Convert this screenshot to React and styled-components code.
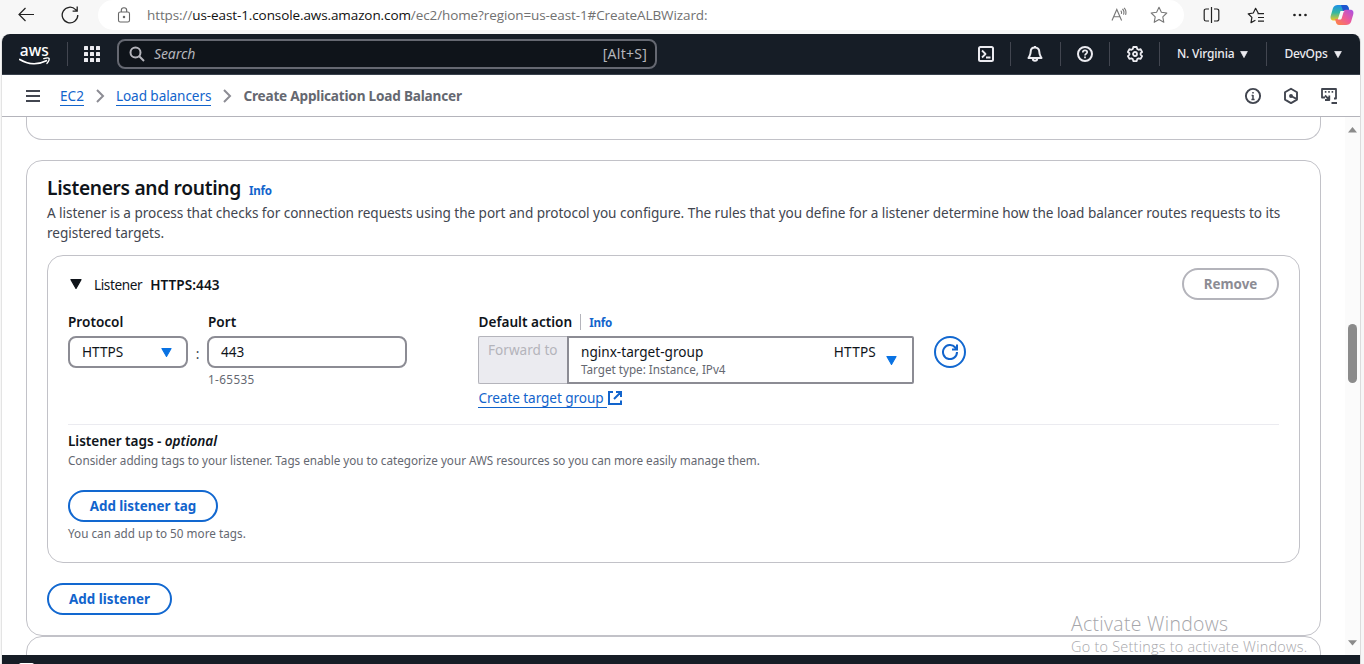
import React from "react";
import styled, { createGlobalStyle } from "styled-components";

const Global = createGlobalStyle`
  *, *::before, *::after { box-sizing: border-box; }
  html, body { margin: 0; padding: 0; overflow: hidden; }
  body {
    background: #f7f7f7;
    color: #0f141a;
    font-family: "Noto Sans", "Open Sans", sans-serif;
    font-size: 13.6px;
    line-height: 20px;
  }
`;

const Screen = styled.div`
  width: 1364px;
  height: 664px;
  overflow: hidden;
  display: flex;
  flex-direction: column;
  position: relative;
`;

const BrowserBar = styled.header`
  height: 34px;
  flex: none;
  display: flex;
  align-items: flex-start;
  svg { display: block; flex: none; }
`;

const BrowserButtons = styled.div`
  width: 98px;
  height: 30px;
  padding-left: 18px;
  display: flex;
  align-items: center;
  gap: 26px;
`;

const AddressBar = styled.div`
  width: 1086px;
  height: 30px;
  padding: 0 16px 0 19px;
  display: flex;
  align-items: center;
  background: #fff;
  border-radius: 15px;
`;

const Url = styled.div`
  flex: 1;
  margin-left: 16px;
  font-family: "Open Sans", "Noto Sans", sans-serif;
  font-size: 13.5px;
  letter-spacing: -0.1px;
  color: #717171;
  white-space: nowrap;
  b { font-weight: 400; color: #111; }
`;

const AddressActions = styled.div`
  display: flex;
  align-items: center;
  gap: 22px;
`;

const BrowserTools = styled.div`
  height: 30px;
  padding-left: 19px;
  display: flex;
  align-items: center;
  gap: 27px;
  svg:last-child { margin-left: -5px; }
`;

const Page = styled.div`
  width: 1359px;
  margin-left: 2px;
  flex: 1;
  min-height: 0;
  display: flex;
  flex-direction: column;
  background: #fff;
  border-right: 1px solid #dcdcdc;
  border-radius: 8px 8px 0 0;
  overflow: hidden;
  box-shadow: -1px 0 0 #e4e4e4;
`;

const AwsNav = styled.nav`
  height: 41px;
  flex: none;
  padding-left: 17px;
  display: flex;
  align-items: center;
  background: #161d26;
  border-bottom: 1px solid #39414c;
  color: #ebebf0;
  svg { display: block; flex: none; }
`;

const NavDivider = styled.i`
  width: 1px;
  height: 24px;
  margin-left: ${(p) => p.$left}px;
  margin-right: ${(p) => p.$right}px;
  background: #424650;
`;

const SearchBox = styled.div`
  width: 540px;
  height: 30px;
  margin-left: 16px;
  margin-right: 321px;
  padding: 0 8px 0 10px;
  display: flex;
  align-items: center;
  gap: 9px;
  background: #0f141a;
  border: 2px solid #656871;
  border-radius: 8px;
  color: #b4b4bb;
  font-size: 14px;
  letter-spacing: 0.25px;
  em { flex: 1; letter-spacing: -0.1px; }
`;

const NavMenu = styled.div`
  display: flex;
  align-items: center;
  gap: ${(p) => p.$gap}px;
  font-size: 12px;
  font-weight: 500;
  letter-spacing: -0.2px;
  white-space: nowrap;
`;

const Crumbs = styled.div`
  height: 42px;
  flex: none;
  padding: 0 22px 0 24px;
  display: flex;
  align-items: center;
  border-bottom: 1px solid #b4b4bb;
  color: #424650;
  svg { display: block; flex: none; }
`;

const CrumbList = styled.div`
  flex: 1;
  margin-left: 20px;
  display: flex;
  align-items: center;
  gap: 11px;
  strong { font-weight: 700; color: #656871; letter-spacing: -0.2px; }
`;

const CrumbLink = styled.a`
  height: 20px;
  line-height: 19px;
  color: #1264cc;
  border-bottom: 1px solid #1264cc;
  letter-spacing: ${(p) => p.$spacing || "0"};
`;

const PanelTools = styled.div`
  display: flex;
  align-items: center;
  gap: 20px;
`;

const Body = styled.div`
  flex: 1;
  min-height: 0;
  display: flex;
`;

const Scroller = styled.main`
  width: 1343px;
  height: 538px;
  overflow: hidden;
  padding: 0 24px;
`;

const Card = styled.section`
  border: 1px solid #c2c2c8;
  border-radius: 16px;
  background: #fff;
`;

const PreviousCard = styled(Card)`
  height: 23px;
  margin-bottom: 20px;
  border-top: 0;
  border-radius: 0 0 16px 16px;
`;

const NextCard = styled(Card)`
  height: 60px;
`;

const RoutingCard = styled(Card)`
  height: 476px;
  padding: 15px 20px 0;
`;

const TitleRow = styled.div`
  height: 24px;
  display: flex;
  align-items: baseline;
  gap: 8px;
`;

const Title = styled.h2`
  margin: 0;
  font-size: 19.2px;
  line-height: 24px;
  font-weight: 600;
  letter-spacing: -0.32px;
`;

const InfoLink = styled.a`
  font-size: 11.6px;
  font-weight: 700;
  letter-spacing: -0.25px;
  color: #1264cc;
`;

const Description = styled.p`
  margin: 3px 0 12px;
  color: #424650;
  white-space: nowrap;
  letter-spacing: -0.052px;
`;

const ListenerCard = styled(Card)`
  height: 308px;
  margin-bottom: 20px;
  padding: 12px 20px 0;
`;

const ListenerHeader = styled.div`
  height: 32px;
  display: flex;
  align-items: center;
  padding-left: 2px;
  > svg { margin-right: 12px; }
  > span { letter-spacing: -0.4px; margin-right: 8px; padding-top: 2px; }
  > strong { flex: 1; font-weight: 600; letter-spacing: 0.05px; padding-top: 2px; }
`;

const Button = styled.button`
  width: ${(p) => p.$width}px;
  height: 32px;
  padding: 0;
  display: block;
  border: 2px solid ${(p) => (p.disabled ? "#b4b4bb" : "#1268d0")};
  border-radius: 16px;
  background: #fff;
  color: ${(p) => (p.disabled ? "#8c8c94" : "#1264cc")};
  font: 700 13.4px/28px "Noto Sans", sans-serif;
  white-space: nowrap;
`;

const RoundButton = styled(Button)`
  display: flex;
  align-items: center;
  justify-content: center;
  margin: 24px 0 0 20px;
`;

const FieldRow = styled.div`
  height: 125px;
  padding-top: 12px;
  display: flex;
  align-items: flex-start;
  border-bottom: 1px solid #ebebf0;
`;

const Field = styled.div`
  width: ${(p) => p.$width}px;
  margin-right: ${(p) => p.$right || 0}px;
`;

const Label = styled.div`
  height: 20px;
  padding-left: ${(p) => p.$inset || 0}px;
  margin-bottom: 4px;
  display: flex;
  align-items: center;
  font-weight: 600;
  line-height: 20px;
  white-space: nowrap;
  ${InfoLink} {
    height: 16px;
    line-height: 17px;
    margin-left: 8px;
    padding-left: 8px;
    border-left: 1px solid #b4b4bb;
  }
`;

const Control = styled.div`
  height: 32px;
  padding: 0 14px 0 12px;
  display: flex;
  align-items: center;
  justify-content: space-between;
  border: 2px solid #8c8c94;
  border-radius: 8px;
`;

const Colon = styled.span`
  width: 19px;
  padding-top: 32px;
  text-align: center;
  color: #424650;
`;

const Hint = styled.div`
  height: 16px;
  margin-top: ${(p) => p.$top}px;
  padding-left: ${(p) => p.$inset || 0}px;
  font-size: 11.7px;
  line-height: 14px;
  color: #656871;
  white-space: nowrap;
  letter-spacing: ${(p) => p.$spacing || "-0.012px"};
`;

const ActionGroup = styled.div`
  height: 48px;
  display: flex;
`;

const ForwardBox = styled.div`
  width: 89px;
  padding: 3px 0 0 9px;
  background: #ebebf0;
  border: 1px solid #b4b4bb;
  border-right: 0;
  border-radius: 2px 0 0 2px;
  color: #b4b4bb;
  white-space: nowrap;
`;

const TargetSelect = styled.div`
  flex: 1;
  padding: 4px 15px 0 12px;
  display: flex;
  border: 2px solid #8c8c94;
  border-radius: 0 2px 2px 0;
  > div { flex: 1; }
  > span { letter-spacing: 0.2px; }
  > svg { margin: 14px 0 0 10px; }
`;

const ExternalLink = styled.a`
  margin-top: 4px;
  display: flex;
  align-items: center;
  color: #1264cc;
  > span {
    width: 129px;
    height: 20px;
    padding-left: 0.5px;
    border-bottom: 1px solid #1264cc;
    margin-right: 1px;
    white-space: nowrap;
    letter-spacing: -0.08px;
  }
`;

const TagsBlock = styled.div`
  padding-top: 6px;
  h3 { margin: 0 0 2px; font-size: 13.6px; line-height: 20px; font-weight: 600; letter-spacing: -0.05px; }
  ${Button} { margin-top: 21px; }
`;

const ScrollTrack = styled.aside`
  width: 15px;
  padding: 10px 0 9px;
  display: flex;
  flex-direction: column;
  align-items: center;
  background: #fbfbfb;
`;

const ScrollThumb = styled.div`
  width: 9px;
  height: 59px;
  margin: 191px 0 auto;
  border-radius: 5px;
  background: #8b8b8b;
`;

const Footer = styled.footer`
  height: 9px;
  flex: none;
  padding: 8px 0 0 17px;
  background: #161d26;
  i { display: block; width: 15px; height: 6px; background: #fff; border-radius: 2px 2px 0 0; }
`;

const Watermark = styled.div`
  position: absolute;
  left: 1071px;
  top: 611px;
  font-family: "Open Sans", sans-serif;
  font-weight: 300;
  color: #a6a6aa;
  white-space: nowrap;
  font-size: 14.4px;
  letter-spacing: 0.27px;
  line-height: 20px;
  p { margin: 0 0 1px; font-size: 19.4px; line-height: 25px; letter-spacing: 0.33px; }
`;

const Triangle = ({ w, h, color }) => (
  <svg width={w} height={h} viewBox="0 0 12 10" preserveAspectRatio="none">
    <path d="M1 .6h10L6 9.4z" fill={color} stroke={color} strokeWidth="1.2" strokeLinejoin="round" />
  </svg>
);

const Icon = ({ size = 16, sw = 2, children, box = 16 }) => (
  <svg width={size} height={size} viewBox={`0 0 ${box} ${box}`} fill="none" stroke="currentColor" strokeWidth={sw} strokeLinejoin="round">
    {children}
  </svg>
);

const Chevron = () => (
  <svg width="10" height="14" viewBox="0 0 10 14" fill="none" stroke="#8c8c94" strokeWidth="2"><path d="M2 1l6 6-6 6" /></svg>
);

const CopilotLogo = () => (
  <svg width="24" height="22" viewBox="0 0 24 22">
    <defs>
      <linearGradient id="cpa" x1="0.3" y1="0" x2="0.3" y2="1">
        <stop offset="0" stopColor="#1c8fe8" /><stop offset=".5" stopColor="#35b8a0" /><stop offset="1" stopColor="#f3c623" />
      </linearGradient>
      <linearGradient id="cpb" x1="1" y1="0" x2="0" y2="1">
        <stop offset="0" stopColor="#a650e8" /><stop offset=".5" stopColor="#ee5a97" /><stop offset="1" stopColor="#ff8a3c" />
      </linearGradient>
    </defs>
    <path d="M7.500 1h8c1.700 0 2.500 1 3 2.500L19.500 7h-3c-1.500 0-2.300.8-2.700 2.200L12 14c-.5 1.500-1.400 2.500-3 2.500H4c-3 0-4-2-3.200-5L3 4C3.800 2 5.700 1 7.500 1z" fill="url(#cpa)" />
    <path d="M11 1h4.500c1.700 0 2.500 1 3 2.500L19.500 7h-3c-1.500 0-2.300.8-2.700 2.200z" fill="#1d55cf" />
    <path d="M16 21H9c-1.700 0-2.500-1-3-2.500L5 15h3.500c1.500 0 2.300-.8 2.700-2.200L13 8c.5-1.500 1.500-2.300 3-2.300h4c3 0 4 2 3.200 4.800L21 18c-.8 2-2.700 3-5 3z" fill="url(#cpb)" />
    <path d="M10.500 7h4.500c-1 .4-1.500 1.200-1.800 2.200L11.800 14c-.3 1-.9 1.600-1.800 1.600H7.800z" fill="#f7f7f7" />
  </svg>
);

const AwsLogo = () => (
  <svg width="32" height="34" viewBox="0 -7 32 34">
    <text x="0.800" y="12" fontFamily="Noto Sans" fontSize="16" fontWeight="500" fill="#fff" textLength="29" lengthAdjust="spacingAndGlyphs">aws</text>
    <path d="M.8 15.400c8.500 5.200 18.500 5.400 26.500 1.300" fill="none" stroke="#fff" strokeWidth="1.800" strokeLinecap="round" />
    <path d="M24.800 14.600c2.500-.8 4.800-.8 5.200-.2.400.8-.6 3.300-2 5" fill="none" stroke="#fff" strokeWidth="1.400" strokeLinecap="round" />
  </svg>
);

export default function App() {
  return (
    <Screen>
      <Global />
      <BrowserBar>
        <BrowserButtons>
          <svg width="17" height="16" viewBox="0 0 17 16" fill="none" stroke="#222" strokeWidth="1.200"><path d="M16 7.500H1M7.500 1L1 7.500 7.500 14" /></svg>
          <svg width="18" height="18" viewBox="0 0 18 18" fill="none" stroke="#222" strokeWidth="1.300"><path d="M16.800 9A7.800 7.800 0 1 1 14.600 3.600L16 5M16.200.6V5.200H11.600" /></svg>
        </BrowserButtons>
        <AddressBar>
          <svg width="14" height="16" viewBox="0 0 14 16" fill="none" stroke="#666" strokeWidth="1.100"><rect x="1.500" y="5" width="11" height="10" rx="1.800" /><path d="M4.300 5V3.500a2.700 2.700 0 0 1 5.400 0V5" /><circle cx="7" cy="10" r=".7" fill="#666" /></svg>
          <Url>https://<b>us-east-1.console.aws.amazon.com</b>/ec2/home?region=us-east-1#CreateALBWizard:</Url>
          <AddressActions>
            <svg width="17" height="16" viewBox="0 0 17 16" fill="none" stroke="#777" strokeWidth="1.100"><path d="M1 13.500L5.800 2.500l4.800 11M2.600 9.800H9M9.800 3.600c.8.800 1 2 .6 3.200M11.400 2c1.500 1.300 1.900 3.500 1.100 5.600M13 .8c1.900 1.700 2.400 4.200 1.600 7" /></svg>
            <svg width="18" height="18" viewBox="0 0 18 18" fill="none" stroke="#777" strokeWidth="1.100" strokeLinejoin="round"><path d="M9 1.300l2.400 5 5.400.7-4 3.800 1 5.500L9 13.600l-4.800 2.700 1-5.500-4-3.800 5.400-.7z" /></svg>
          </AddressActions>
        </AddressBar>
        <BrowserTools>
          <svg width="17" height="16" viewBox="0 0 17 16" fill="none" stroke="#222" strokeWidth="1.200"><path d="M8.500 0v16M6 2H3A1.800 1.800 0 0 0 1.200 3.800v8.400A1.800 1.800 0 0 0 3 14h3M11 2h3a1.800 1.800 0 0 1 1.800 1.800v8.400A1.800 1.800 0 0 1 14 14h-3" /></svg>
          <svg width="18" height="17" viewBox="0 0 18 17" fill="none" stroke="#222" strokeWidth="1.200" strokeLinejoin="round"><path d="M11.300 6.200L8.600 1.300 6.300 6 1.200 6.800l3.700 3.600-.9 5.200 4.400-2.400M10.500 6.700h6.500M11 10.500h6M11 14.200h6" /></svg>
          <svg width="16" height="16" viewBox="0 0 16 16" fill="#222"><circle cx="2.500" cy="8" r="1.350" /><circle cx="8" cy="8" r="1.350" /><circle cx="13.500" cy="8" r="1.350" /></svg>
          <CopilotLogo />
        </BrowserTools>
      </BrowserBar>

      <Page>
        <AwsNav>
          <AwsLogo />
          <NavDivider $left={16} $right={16} />
          <svg width="17" height="17" viewBox="0 0 17 17" fill="#ebebf0">
            {[0, 6, 12].map((y) => [0, 6, 12].map((x) => <rect key={`${x}-${y}`} x={x} y={y} width="4" height="4" rx=".6" />))}
          </svg>
          <SearchBox>
            <Icon size={16} sw={2}><circle cx="6.500" cy="6.500" r="5" /><path d="M10 10l5 5" /></Icon>
            <em>Search</em>
            <span>[Alt+S]</span>
          </SearchBox>
          <Icon><rect x="1" y="1" width="14" height="14" rx="1.500" /><path d="M4 4.500L7.500 8 4 11.500M8 11.500h4.500" strokeWidth="1.800" /></Icon>
          <NavDivider $left={16} $right={16} />
          <Icon><path d="M8 1.500c-2.800 0-4.300 2-4.300 4.300C3.700 9 2.500 10 1.500 12h13c-1-2-2.200-3-2.200-6.200 0-2.300-1.500-4.300-4.300-4.300z" /><path d="M5.800 12.500a2.200 2.200 0 0 0 4.400 0M8 0v2" /></Icon>
          <NavDivider $left={17} $right={16} />
          <Icon><circle cx="8" cy="8" r="7" /><path d="M5.800 6.500C5.800 4.900 6.800 4.300 8 4.300s2.200.7 2.200 1.900C10.200 7.700 8 7.700 8 9.400M8 10.600v1.700" strokeWidth="1.700" /></Icon>
          <NavDivider $left={16} $right={17} />
          <Icon><path d="M6.300 1h3.400l.5 2 1.400.8 2-.6 1.500 2.800L13.600 7.300v1.400l1.500 1.400-1.500 2.800-2-.6-1.400.8-.5 2H6.300l-.5-2-1.400-.8-2 .6L.9 10.100l1.500-1.400V7.300L.9 6l1.500-2.800 2 .6L5.800 3z" strokeWidth="1.800" /><circle cx="8" cy="8" r="2" strokeWidth="1.800" /></Icon>
          <NavDivider $left={16} $right={17} />
          <NavMenu $gap={6}>N. Virginia<Triangle w={8} h={7} color="#ebebf0" /></NavMenu>
          <NavDivider $left={18} $right={17} />
          <NavMenu $gap={6}>DevOps<Triangle w={8} h={7} color="#ebebf0" /></NavMenu>
        </AwsNav>

        <Crumbs>
          <svg width="14" height="12" viewBox="0 0 14 12" stroke="#424650" strokeWidth="2"><path d="M0 1h14M0 6h14M0 11h14" /></svg>
          <CrumbList>
            <CrumbLink>EC2</CrumbLink>
            <Chevron />
            <CrumbLink $spacing="-0.09px">Load balancers</CrumbLink>
            <Chevron />
            <strong>Create Application Load Balancer</strong>
          </CrumbList>
          <PanelTools>
            <Icon size={18} box={18} sw={1.900}><circle cx="9" cy="9" r="7.100" /><path d="M9 8v5M9 4.900v1.700M7.600 8.500H9M7.400 12.500h3.200" strokeWidth="1.500" /></Icon>
            <Icon size={18} box={18} sw={1.900}><path d="M9 1.700l6 3.500v7.400l-6 3.500-6-3.500V5.200z" /><circle cx="9" cy="9" r="1" fill="currentColor" /><path d="M9 9l5.500 2.800" /></Icon>
            <Icon size={18} box={18} sw={1.800}><path d="M5 10.500H2V2h14v9.500h-2" /><path d="M4.800 4.900h1.600M8.200 4.900h1.600M11.600 4.900h1.600" strokeWidth="1.600" /><path d="M5 8.500l4 4M9.300 8.500v4.500H5M11.500 16h5.500" /></Icon>
          </PanelTools>
        </Crumbs>

        <Body>
          <Scroller>
            <PreviousCard />
            <RoutingCard>
              <TitleRow>
                <Title>Listeners and routing</Title>
                <InfoLink>Info</InfoLink>
              </TitleRow>
              <Description>
                A listener is a process that checks for connection requests using the port and protocol you configure. The rules that you define for a listener determine how the load balancer routes requests to its<br />
                registered targets.
              </Description>

              <ListenerCard>
                <ListenerHeader>
                  <Triangle w={12} h={10} color="#0f141a" />
                  <span>Listener</span>
                  <strong>HTTPS:443</strong>
                  <Button disabled $width={97}>Remove</Button>
                </ListenerHeader>
                <FieldRow>
                  <Field $width={120}>
                    <Label>Protocol</Label>
                    <Control>HTTPS<Triangle w={11} h={9} color="#0972e3" /></Control>
                  </Field>
                  <Colon>:</Colon>
                  <Field $width={200} $right={71}>
                    <Label $inset={1}>Port</Label>
                    <Control>443</Control>
                    <Hint $top={4} $inset={1} $spacing="0.4px">1-65535</Hint>
                  </Field>
                  <Field $width={436}>
                    <Label $inset={0.5}>Default action<InfoLink>Info</InfoLink></Label>
                    <ActionGroup>
                      <ForwardBox>Forward to</ForwardBox>
                      <TargetSelect>
                        <div>
                          nginx-target-group
                          <Hint $top={0}>Target type: Instance, IPv4</Hint>
                        </div>
                        <span>HTTPS</span>
                        <Triangle w={11} h={9} color="#0972e3" />
                      </TargetSelect>
                    </ActionGroup>
                    <ExternalLink>
                      <span>Create target group</span>
                      <svg width="14" height="14" viewBox="0 0 14 14" fill="none" stroke="#1264cc" strokeWidth="2"><path d="M5 1H1v12h12V9.500M8 1h5v5M13 1L6 8" /></svg>
                    </ExternalLink>
                  </Field>
                  <RoundButton $width={32}>
                    <svg width="16" height="16" viewBox="0 0 16 16" fill="none" stroke="#1264cc" strokeWidth="2"><path d="M15 8a7 7 0 1 1-1.700-4.500L15 5.300M15 .5V5.500H10" /></svg>
                  </RoundButton>
                </FieldRow>
                <TagsBlock>
                  <h3>Listener tags - <em>optional</em></h3>
                  <Hint $top={0}>Consider adding tags to your listener. Tags enable you to categorize your AWS resources so you can more easily manage them.</Hint>
                  <Button $width={150}>Add listener tag</Button>
                  <Hint $top={4} $spacing="0.03px">You can add up to 50 more tags.</Hint>
                </TagsBlock>
              </ListenerCard>
              <Button $width={125}>Add listener</Button>
            </RoutingCard>
            <NextCard />
          </Scroller>
          <ScrollTrack>
            <svg width="9" height="6" viewBox="0 0 9 6" fill="#8b8b8b"><path d="M4.500 0L9 5.500H0z" /></svg>
            <ScrollThumb />
            <svg width="9" height="6" viewBox="0 0 9 6" fill="#8b8b8b"><path d="M4.500 5.500L9 .3H0z" /></svg>
          </ScrollTrack>
        </Body>
        <Footer><i /></Footer>
      </Page>

      <Watermark>
        <p>Activate Windows</p>
        Go to Settings to activate Windows.
      </Watermark>
    </Screen>
  );
}
